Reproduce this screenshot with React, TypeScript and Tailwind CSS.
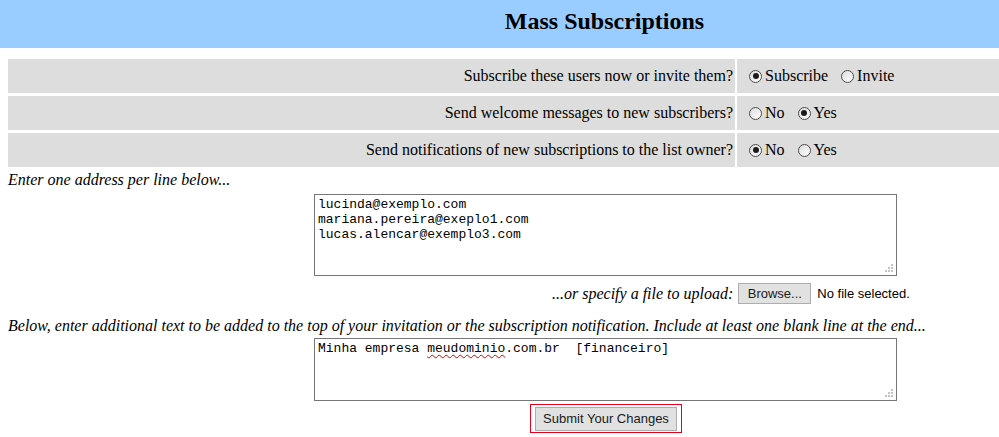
import React from 'react';

type Choice = { label: string; checked: boolean };
type OptionRow = { question: string; choices: Choice[] };

const ROWS: OptionRow[] = [
  {
    question: 'Subscribe these users now or invite them?',
    choices: [
      { label: 'Subscribe', checked: true },
      { label: 'Invite', checked: false },
    ],
  },
  {
    question: 'Send welcome messages to new subscribers?',
    choices: [
      { label: 'No', checked: false },
      { label: 'Yes', checked: true },
    ],
  },
  {
    question: 'Send notifications of new subscriptions to the list owner?',
    choices: [
      { label: 'No', checked: true },
      { label: 'Yes', checked: false },
    ],
  },
];

function Radio({ checked }: { checked: boolean }) {
  return (
    <span className="inline-flex h-[13px] w-[13px] items-center justify-center rounded-full border border-[#4d4d4d] bg-gradient-to-br from-[#dcdcdc] to-white">
      {checked ? <span className="h-[6px] w-[6px] rounded-full bg-[#1a1a1a]" /> : null}
    </span>
  );
}

function Grip() {
  return (
    <svg width="8" height="8" viewBox="0 0 8 8" className="absolute bottom-[3px] right-[3px]">
      <rect x="6" y="0" width="2" height="2" fill="#c4c4c4" />
      <rect x="3" y="3" width="2" height="2" fill="#c4c4c4" />
      <rect x="6" y="3" width="2" height="2" fill="#c4c4c4" />
      <rect x="0" y="6" width="2" height="2" fill="#c4c4c4" />
      <rect x="3" y="6" width="2" height="2" fill="#c4c4c4" />
      <rect x="6" y="6" width="2" height="2" fill="#c4c4c4" />
    </svg>
  );
}

export default function App() {
  return (
    <div className="h-[437px] w-[999px] overflow-hidden bg-white text-[16px] text-black" style={{ fontFamily: '"Liberation Serif", serif' }}>
      <div className="flex h-12 items-center justify-center bg-[#99ccff] pb-[7px] pl-[210px]">
        <h2 className="text-[24px] font-bold leading-7">Mass Subscriptions</h2>
      </div>

      <div className="ml-2 mt-[11px] grid grid-cols-[727px_1fr] gap-x-[2px] gap-y-[3px]">
        {ROWS.map((row) => (
          <React.Fragment key={row.question}>
            <div className="flex h-[34px] items-center justify-end bg-[#dddddd] pr-[2px]">{row.question}</div>
            <div className="flex h-[34px] items-center bg-[#dddddd] pl-3">
              {row.choices.map((choice) => (
                <span key={choice.label} className="mr-[13px] inline-flex items-center gap-[3px]">
                  <Radio checked={choice.checked} />
                  {choice.label}
                </span>
              ))}
            </div>
          </React.Fragment>
        ))}
      </div>

      <p className="ml-2 mt-[3px] italic leading-[20px]">Enter one address per line below...</p>

      <div
        className="relative ml-[314px] mt-[4px] h-[82px] w-[583px] border border-[#767676] px-[3px] py-[2px] text-[13px] leading-[15px] whitespace-pre"
        style={{ fontFamily: '"Liberation Mono", monospace' }}
      >
        {'lucinda@exemplo.com\nmariana.pereira@exeplo1.com\nlucas.alencar@exemplo3.com'}
        <Grip />
      </div>

      <div className="ml-[552px] mt-[7px] flex h-[21px] items-center">
        <span className="italic">...or specify a file to upload:</span>
        <button
          type="button"
          className="ml-[5px] h-[21px] w-[73px] border border-[#adadad] bg-[#e1e1e1] text-[13px] text-[#1a1a1a]"
          style={{ fontFamily: '"Liberation Sans", sans-serif' }}
        >
          Browse...
        </button>
        <span className="ml-[6px] text-[13px]" style={{ fontFamily: '"Liberation Sans", sans-serif' }}>
          No file selected.
        </span>
      </div>

      <p className="ml-2 mt-[12px] italic leading-[20px]">
        Below, enter additional text to be added to the top of your invitation or the subscription notification. Include at least one blank line at the end...
      </p>

      <div
        className="relative ml-[314px] mt-[2px] h-[63px] w-[583px] border border-[#767676] px-[3px] py-[2px] text-[13px] leading-[15px] whitespace-pre"
        style={{ fontFamily: '"Liberation Mono", monospace' }}
      >
        {'Minha empresa '}
        <span className="underline decoration-[#e00000] decoration-wavy decoration-1 underline-offset-2">meudominio</span>
        {'.com.br  [financeiro]'}
        <Grip />
      </div>

      <div className="ml-[530px] mt-[3px] flex h-[29px] w-[152px] items-center justify-center border border-[#e8001c]">
        <button
          type="button"
          className="h-[24px] w-[142px] border border-[#adadad] bg-[#e1e1e1] text-[13px] text-[#1a1a1a]"
          style={{ fontFamily: '"Liberation Sans", sans-serif' }}
        >
          Submit Your Changes
        </button>
      </div>
    </div>
  );
}
